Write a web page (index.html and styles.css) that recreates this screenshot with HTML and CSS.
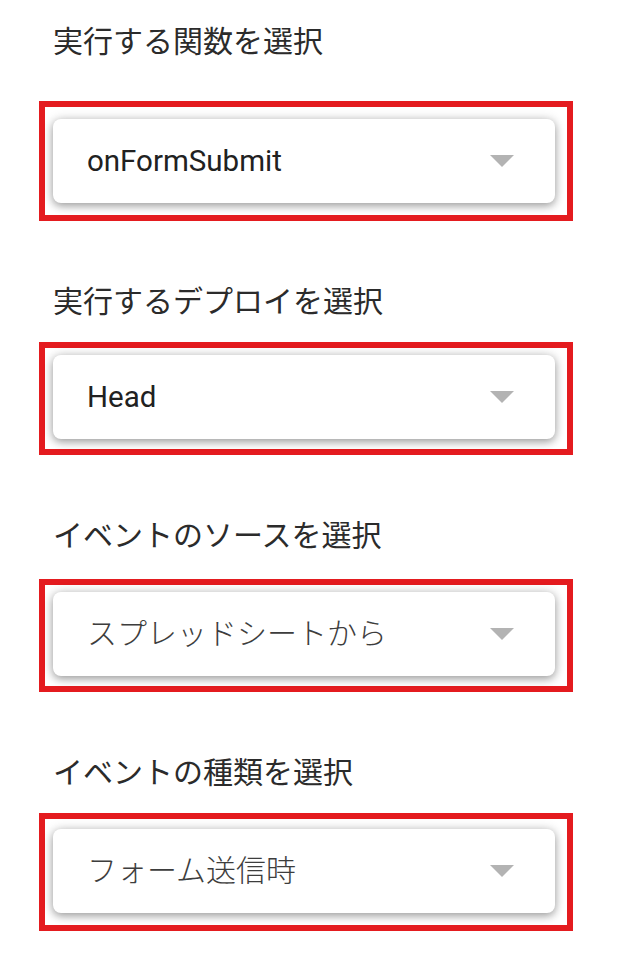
FILE: index.html
```html
<!DOCTYPE html>
<html lang="ja">
<head>
  <meta charset="UTF-8">
  <meta name="viewport" content="width=device-width, initial-scale=1.0">
  <title>トリガーを追加</title>
  <link rel="stylesheet" href="styles.css">
</head>
<body>
  <div class="page">
    <div class="field first">
      <div class="label">実行する関数を選択</div>
      <div class="frame">
        <div class="select">
          <span class="value">onFormSubmit</span>
          <span class="arrow"></span>
        </div>
      </div>
    </div>

    <div class="field">
      <div class="label">実行するデプロイを選択</div>
      <div class="frame short">
        <div class="select">
          <span class="value">Head</span>
          <span class="arrow"></span>
        </div>
      </div>
    </div>

    <div class="field third">
      <div class="label">イベントのソースを選択</div>
      <div class="frame short">
        <div class="select">
          <span class="value jp">スプレッドシートから</span>
          <span class="arrow"></span>
        </div>
      </div>
    </div>

    <div class="field">
      <div class="label">イベントの種類を選択</div>
      <div class="frame last">
        <div class="select">
          <span class="value jp">フォーム送信時</span>
          <span class="arrow"></span>
        </div>
      </div>
    </div>
  </div>
</body>
</html>
```

FILE: styles.css
```css
body { margin: 0; background: #fff; font-family: Roboto, "Noto Sans CJK JP", sans-serif; color: #222; }
.page { padding: 19px 0 0 39px; }
.field + .field { margin-top: 58px; }
.label { font-family: "Noto Sans CJK JP", sans-serif; font-size: 30px; line-height: 40px; color: #2b2b2b; margin: 0 0 23px 14px; }
.field.first .label { margin-bottom: 42px; }
.field.third .label { margin-bottom: 26px; }
.frame { box-sizing: border-box; width: 534px; border: 6px solid #e41b1f; padding: 12px 12px 12px 8px; }
.frame.short { padding-top: 7px; padding-bottom: 10px; }
.frame.last { padding-top: 10px; padding-bottom: 12px; }
.select { height: 84px; background: #fff; border-radius: 8px; display: flex; align-items: center; justify-content: space-between; padding: 0 41px 0 34px; box-shadow: 0 3px 9px rgba(0,0,0,0.32), 0 0 12px rgba(0,0,0,0.14); }
.value { font-size: 29.5px; color: #212121; }
.value.jp { font-family: "Noto Sans CJK JP", sans-serif; font-size: 30px; font-weight: 300; color: #3d3d3d; margin-bottom: 6px; }
.arrow { width: 0; height: 0; border-top: 12px solid #b3b3b3; border-left: 12px solid transparent; border-right: 12px solid transparent; }
```
